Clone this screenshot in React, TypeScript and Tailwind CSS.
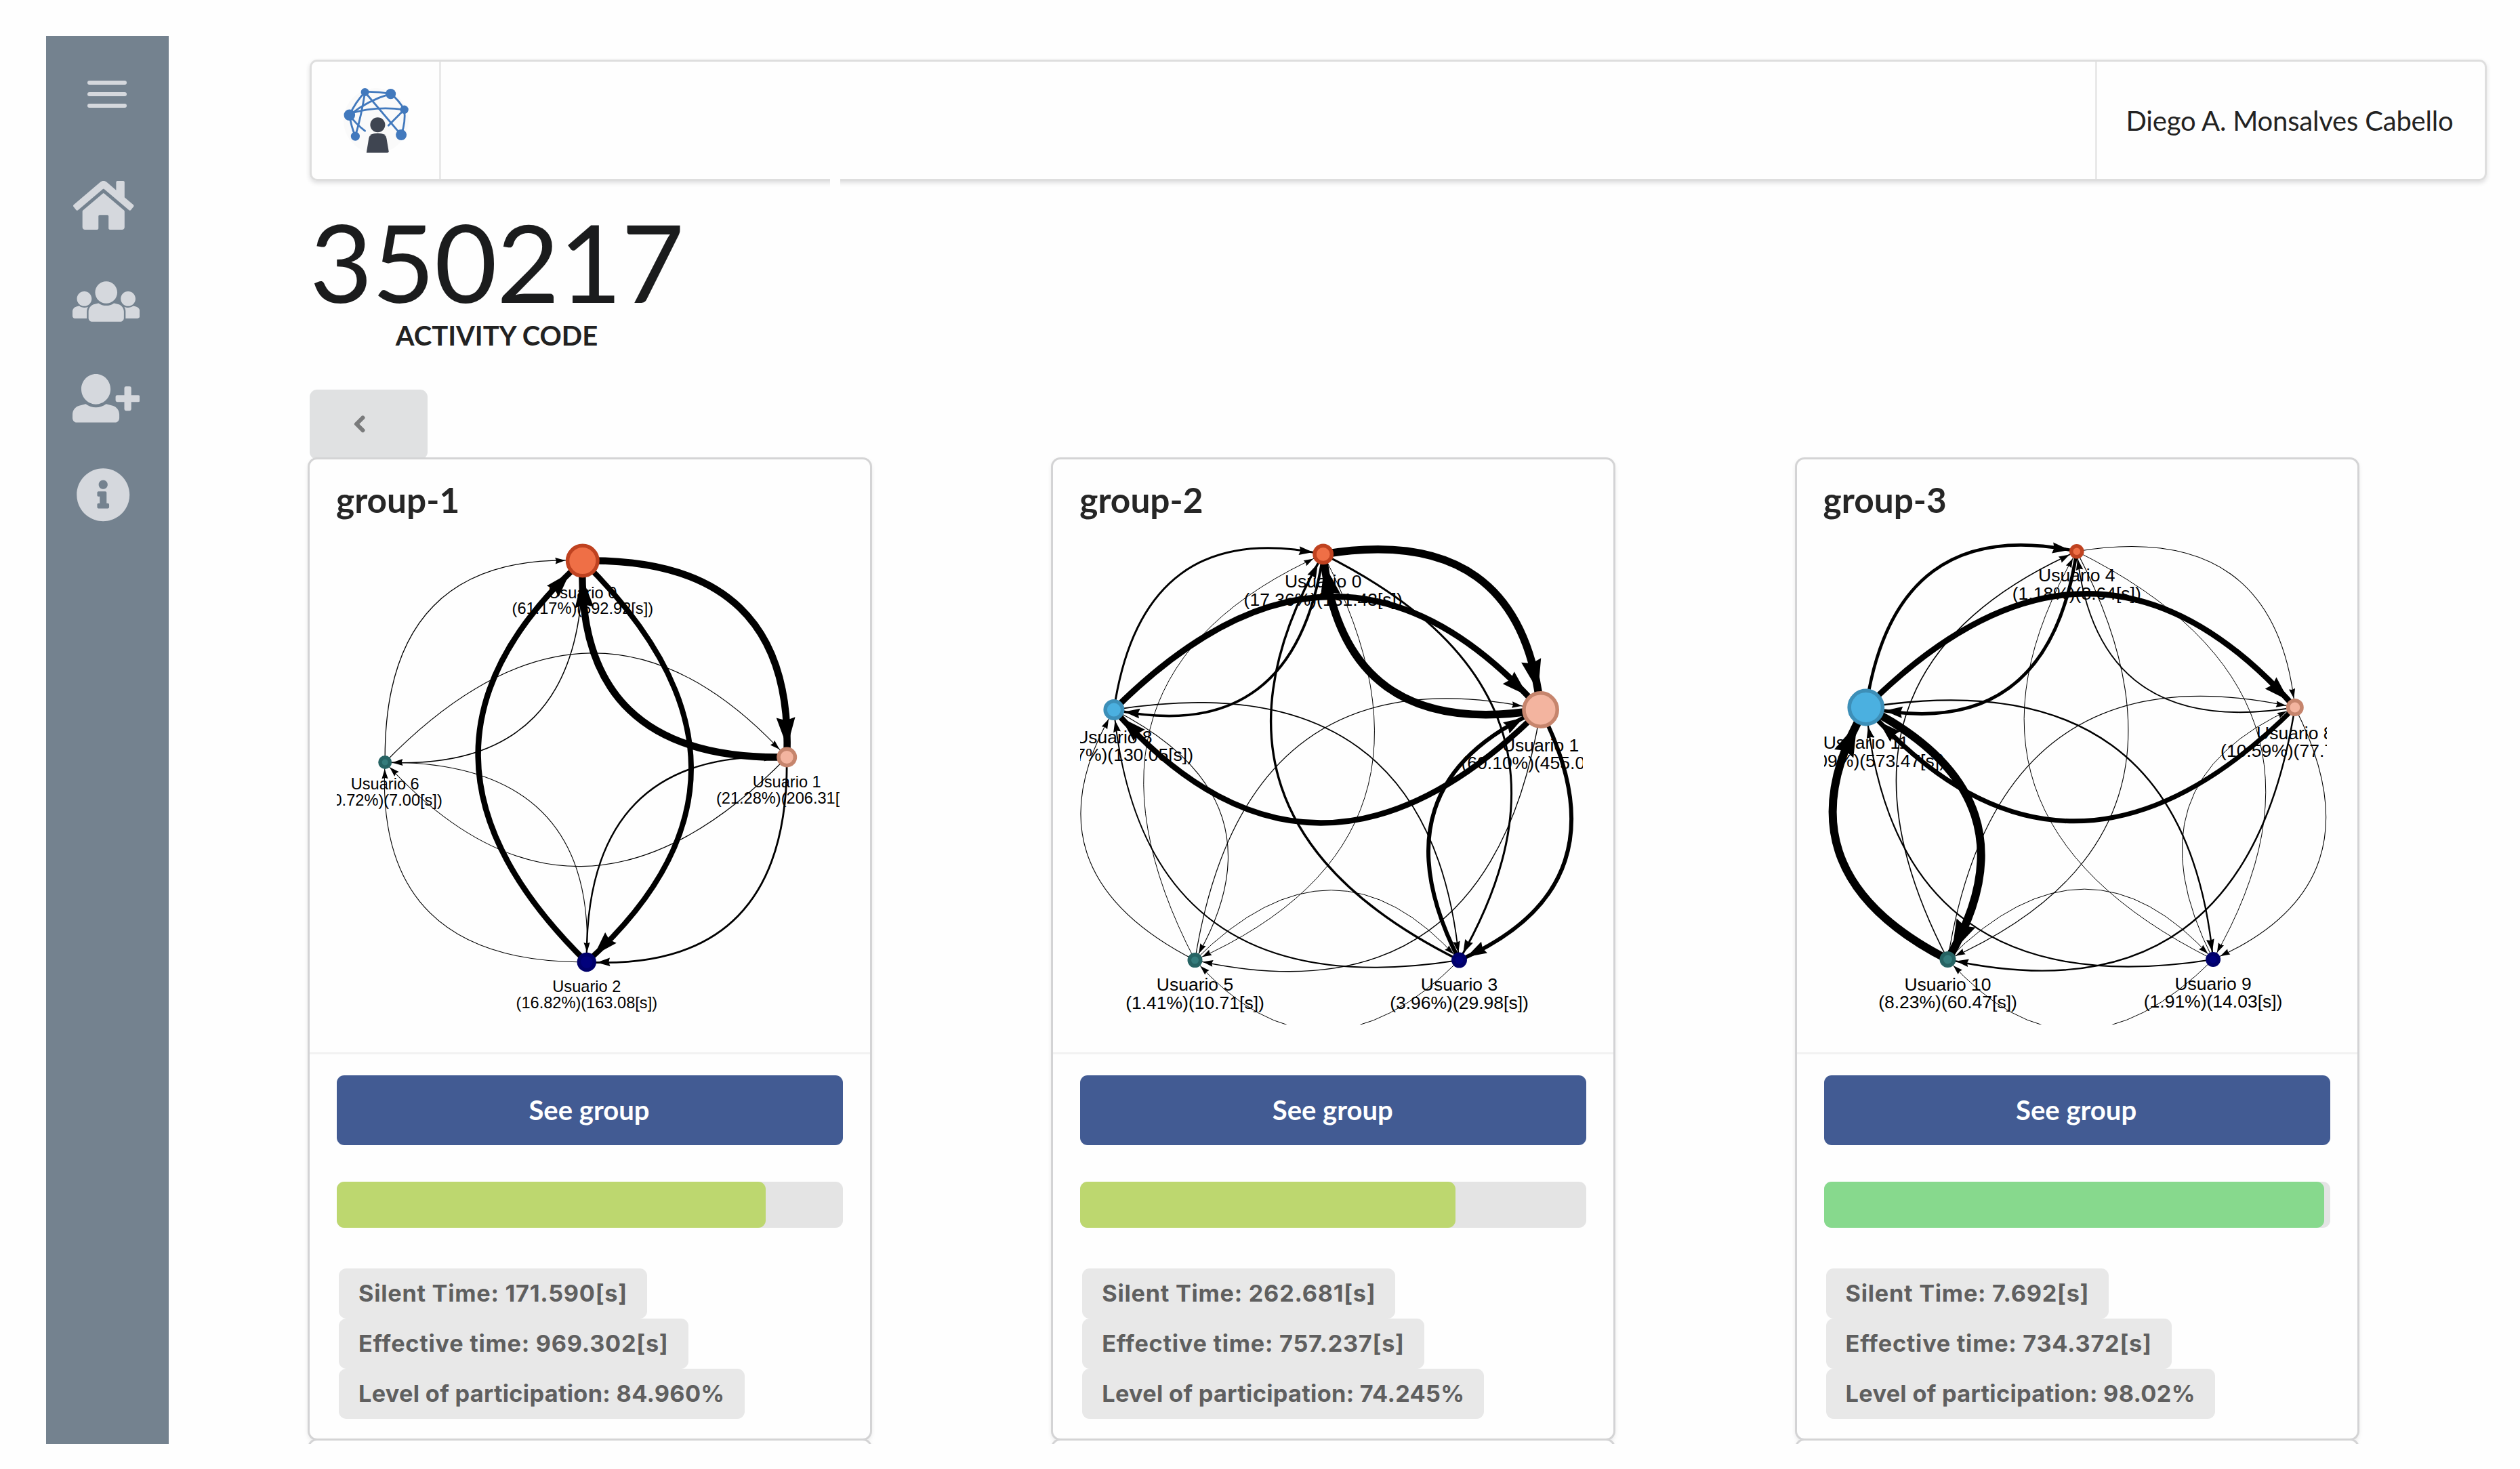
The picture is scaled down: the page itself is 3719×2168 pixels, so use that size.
import React from 'react';
import { FaChevronLeft, FaInfoCircle } from 'react-icons/fa';

interface GraphNode {
  id: number;
  x: number;
  y: number;
  r: number;
  kind: 'orange' | 'salmon' | 'navy' | 'teal' | 'blue';
  stats: string;
}

// from, to, line width
type Edge = [number, number, number];

interface Group {
  name: string;
  fontSize: number;
  nodes: GraphNode[];
  edges: Edge[];
  progress: number;
  barClass: string;
  labels: string[];
}

const COLORS = {
  orange: { fill: '#ef6f46', stroke: '#bf4220' },
  salmon: { fill: '#f3b49f', stroke: '#c6856d' },
  navy: { fill: '#01017c', stroke: '#00006a' },
  teal: { fill: '#347b7b', stroke: '#266363' },
  blue: { fill: '#4bb0e0', stroke: '#3d8fb8' },
};

const groups: Group[] = [
  {
    name: 'group-1',
    fontSize: 23.6,
    nodes: [
      { id: 0, x: 362.8, y: 57.6, r: 25, kind: 'orange', stats: '(61.17%)(592.92[s])' },
      { id: 1, x: 664.2, y: 347.5, r: 15, kind: 'salmon', stats: '(21.28%)(206.31[s])' },
      { id: 2, x: 368.8, y: 650, r: 14.2, kind: 'navy', stats: '(16.82%)(163.08[s])' },
      { id: 6, x: 71.2, y: 355, r: 10, kind: 'teal', stats: '(0.72%)(7.00[s])' },
    ],
    edges: [
      [0, 1, 10.5], [1, 0, 10.5], [0, 2, 8], [2, 0, 8.5], [1, 2, 2.8], [2, 1, 2.4],
      [6, 0, 1.3], [0, 6, 1.5], [6, 1, 1.1], [1, 6, 1.1], [6, 2, 1.1], [2, 6, 1.1],
    ],
    progress: 84.7,
    barClass: 'bg-[#bdd76f]',
    labels: ['Silent Time: 171.590[s]', 'Effective time: 969.302[s]', 'Level of participation: 84.960%'],
  },
  {
    name: 'group-2',
    fontSize: 26.5,
    nodes: [
      { id: 0, x: 358.7, y: 47.9, r: 15.4, kind: 'orange', stats: '(17.36%)(131.43[s])' },
      { id: 1, x: 679.6, y: 277.5, r: 27.4, kind: 'salmon', stats: '(60.10%)(455.07[s])' },
      { id: 3, x: 559.5, y: 647.1, r: 11.5, kind: 'navy', stats: '(3.96%)(29.98[s])' },
      { id: 5, x: 169.5, y: 647.1, r: 11, kind: 'teal', stats: '(1.41%)(10.71[s])' },
      { id: 8, x: 49.9, y: 277.5, r: 15.5, kind: 'blue', stats: '(17.17%)(130.05[s])' },
    ],
    edges: [
      [0, 1, 11.5], [1, 0, 11.5], [8, 1, 9], [1, 8, 8.5], [8, 0, 3], [0, 8, 3.8],
      [0, 3, 3], [3, 0, 3.4], [1, 3, 6], [3, 1, 6], [8, 3, 1.8], [3, 8, 2],
      [5, 1, 1.2], [1, 5, 1.4], [0, 5, 1], [5, 0, 1], [8, 5, 1.1], [5, 8, 1.1],
      [5, 3, 1], [3, 5, 1],
    ],
    progress: 74.1,
    barClass: 'bg-[#bdd76f]',
    labels: ['Silent Time: 262.681[s]', 'Effective time: 757.237[s]', 'Level of participation: 74.245%'],
  },
  {
    name: 'group-3',
    fontSize: 26.5,
    nodes: [
      { id: 4, x: 372.8, y: 43.8, r: 10.8, kind: 'orange', stats: '(1.18%)(8.64[s])' },
      { id: 8, x: 694.8, y: 274, r: 13, kind: 'salmon', stats: '(10.59%)(77.76[s])' },
      { id: 9, x: 574.1, y: 646, r: 11, kind: 'navy', stats: '(1.91%)(14.03[s])' },
      { id: 10, x: 182.5, y: 646, r: 12, kind: 'teal', stats: '(8.23%)(60.47[s])' },
      { id: 11, x: 61.8, y: 274, r: 27.4, kind: 'blue', stats: '(78.09%)(573.47[s])' },
    ],
    edges: [
      [11, 4, 4.6], [4, 11, 5], [11, 8, 8.5], [8, 11, 7], [10, 11, 12], [11, 10, 12],
      [11, 9, 2.4], [9, 11, 2.2], [8, 10, 2.4], [10, 8, 1.2], [4, 8, 1.1], [8, 4, 1.8],
      [8, 9, 1.1], [9, 8, 1], [4, 9, 1], [9, 4, 1], [4, 10, 1.1], [10, 4, 1.6],
      [10, 9, 1], [9, 10, 1],
    ],
    progress: 98.9,
    barClass: 'bg-[#87d98d]',
    labels: ['Silent Time: 7.692[s]', 'Effective time: 734.372[s]', 'Level of participation: 98.02%'],
  },
];

const GraphEdge: React.FC<{ from: GraphNode; to: GraphNode; width: number }> = ({ from, to, width }) => {
  const dx = to.x - from.x;
  const dy = to.y - from.y;
  const cx = from.x + 0.53033 * (dx + dy);
  const cy = from.y + 0.53033 * (dy - dx);
  const at = (t: number) => ({
    x: (1 - t) * (1 - t) * from.x + 2 * t * (1 - t) * cx + t * t * to.x,
    y: (1 - t) * (1 - t) * from.y + 2 * t * (1 - t) * cy + t * t * to.y,
  });

  // walk back from the target until the curve leaves the node
  let t = 1;
  while (t > 0 && Math.hypot(at(t).x - to.x, at(t).y - to.y) < to.r) t -= 0.001;
  const tip = at(t);
  const guide = at(t - 0.1);
  const angle = (Math.atan2(tip.y - guide.y, tip.x - guide.x) * 180) / Math.PI;
  const len = 11 + 3.1 * width;

  return (
    <g>
      <path
        d={`M${from.x} ${from.y}Q${cx} ${cy} ${to.x} ${to.y}`}
        fill="none"
        stroke="#000"
        strokeWidth={width}
      />
      <path
        d="M0 0L-1 .32L-.9 0L-1 -.32Z"
        transform={`translate(${tip.x} ${tip.y}) rotate(${angle}) scale(${len})`}
      />
    </g>
  );
};

const Network: React.FC<{ group: Group }> = ({ group }) => {
  const find = (id: number) => group.nodes.find((n) => n.id === id)!;
  const fs = group.fontSize;
  return (
    <svg width="742" height="742" viewBox="0 0 742 742" className="block overflow-hidden">
      {group.nodes.map((n) => (
        <g key={n.id} fontSize={fs} textAnchor="middle" className="font-['Liberation_Sans',sans-serif]">
          <text x={n.x} y={n.y + n.r + fs * 1.27}>Usuario {n.id}</text>
          <text x={n.x} y={n.y + n.r + fs * 2.28}>{n.stats}</text>
        </g>
      ))}
      {group.edges.map(([a, b, w]) => (
        <GraphEdge key={`${a}-${b}`} from={find(a)} to={find(b)} width={w} />
      ))}
      {group.nodes.map((n) => (
        <circle
          key={n.id}
          cx={n.x}
          cy={n.y}
          r={n.r - 2.75}
          fill={COLORS[n.kind].fill}
          stroke={COLORS[n.kind].stroke}
          strokeWidth={5.5}
        />
      ))}
    </svg>
  );
};

const GroupCard: React.FC<{ group: Group }> = ({ group }) => (
  <div className="w-[827px] shrink-0 rounded-[11px] bg-[#fefefe] shadow-[0_3px_8px_0_#d4d4d5,0_0_0_3px_#d4d4d5]">
    <div className="px-10 pt-[27px] pb-[41px]">
      <h2 className="-ml-px text-[51.4px] leading-[65px] font-bold text-[#262626]">{group.name}</h2>
      <Network group={group} />
    </div>
    <div className="border-t-3 border-[#f2f2f2] px-10 pt-[31px] pb-[29px]">
      <button className="block h-[103px] w-full rounded-[11px] bg-[#425b93] pr-0.5 pb-px text-[40px] font-bold text-white">
        See group
      </button>
      <div className="mt-[54px] h-[68px] rounded-[11px] bg-[#e4e4e4]">
        <div className={`h-full rounded-[11px] ${group.barClass}`} style={{ width: `${group.progress}%` }} />
      </div>
      <div className="mt-[60px] ml-[3px] flex flex-col items-start">
        {group.labels.map((label) => (
          <span
            key={label}
            className={`flex h-[74px] items-center rounded-[11px] bg-[#e8e8e8] px-[29px] font-['Inter',sans-serif] text-[34.3px] font-bold whitespace-nowrap text-[#5f5f5f] ${
              label.endsWith('%') ? 'tracking-[0.3px]' : 'tracking-[0.73px]'
            }`}
          >
            {label}
          </span>
        ))}
      </div>
    </div>
  </div>
);

const Logo = () => (
  <svg width="100" height="100" viewBox="0 0 100 100">
    <circle cx="50" cy="50" r="48" fill="#fafafa" />
    <g fill="none" stroke="#4279bd" strokeWidth="2.8" strokeLinecap="round">
      <path d="M33.6 7.5Q52 7 71.6 10.4M33.6 8Q20 22 10.8 41.8M71.6 10.4Q38 20 10.8 41.8M71.6 10.4Q83 19 91.6 33.8" />
      <path d="M10.8 40Q48 28 91.6 33.8M91.6 33.8Q94 52 87.1 71.1M10.8 41.8Q13 58 19.4 73.1M33.6 8Q29 40 19.4 73.1" />
      <path d="M33.6 8L87.1 71.1M10.8 41.8Q20 55 33.6 65.1M91.6 33.8L68.3 57.2" />
    </g>
    <g fill="#4279bd">
      <circle cx="33.6" cy="8" r="6" />
      <circle cx="71.6" cy="10.6" r="7.6" />
      <circle cx="10.8" cy="41.8" r="8.3" />
      <circle cx="91.6" cy="33.8" r="6.2" />
      <circle cx="19.4" cy="73.1" r="6.6" />
      <circle cx="87.1" cy="71.1" r="8" />
    </g>
    <g fill="#3f4551">
      <circle cx="52.4" cy="56.2" r="11" />
      <path d="M35.8 97.5L39.3 76Q41 68.6 52.4 68.6Q64 68.6 65.4 76L68.8 96L67 97.5Z" />
    </g>
  </svg>
);

const Sidebar = () => (
  <aside className="mt-[53px] ml-[68px] flex h-[2078px] w-[181px] shrink-0 flex-col items-start bg-[#74828f] text-[#d5d8dd]">
    <div className="mt-[66px] ml-[61px] flex flex-col gap-[11px]">
      <span className="h-1.5 w-[58px] rounded-full bg-current" />
      <span className="h-1.5 w-[58px] rounded-full bg-current" />
      <span className="h-1.5 w-[58px] rounded-full bg-current" />
    </div>
    <svg className="mt-[108px] ml-10" width="89.5" height="72" viewBox="0 32 576 448" preserveAspectRatio="none" fill="currentColor">
      <path d="M488 312.7V456c0 13.3-10.7 24-24 24H348c-6.6 0-12-5.4-12-12V356c0-6.6-5.4-12-12-12h-72c-6.6 0-12 5.4-12 12v112c0 6.6-5.4 12-12 12H112c-13.3 0-24-10.7-24-24V312.7c0-3.6 1.6-7 4.4-9.3l188-154.8c4.4-3.6 10.8-3.6 15.3 0l188 154.8c2.7 2.3 4.3 5.7 4.3 9.3zm83.6-60.9L488 182.9V44.4c0-6.6-5.4-12-12-12h-56c-6.6 0-12 5.4-12 12V117l-89.5-73.7c-17.7-14.6-43.3-14.6-61 0L4.4 251.8c-5.1 4.2-5.8 11.8-1.6 16.9l25.5 31c4.2 5.1 11.8 5.8 16.9 1.6l235.2-193.7c4.4-3.6 10.8-3.6 15.3 0l235.2 193.7c5.1 4.2 12.7 3.5 16.9-1.6l25.5-31c4.2-5.2 3.4-12.7-1.7-16.9z" />
    </svg>
    <svg className="mt-[76px] ml-[38.5px]" width="99.5" height="60" viewBox="0 64 640 384" fill="currentColor">
      <path d="M320 64c57.99 0 105 47.01 105 105s-47.01 105-105 105-105-47.01-105-105S262.01 64 320 64zm113.463 217.366l-39.982-9.996c-49.168 35.365-108.766 27.473-146.961 0l-39.982 9.996C174.485 289.379 152 318.177 152 351.216V412c0 19.882 16.118 36 36 36h264c19.882 0 36-16.118 36-36v-60.784c0-33.039-22.485-61.837-54.537-69.85zM528 300c38.66 0 70-31.34 70-70s-31.34-70-70-70-70 31.34-70 70 31.34 70 70 70zm-416 0c38.66 0 70-31.34 70-70s-31.34-70-70-70-70 31.34-70 70 31.34 70 70 70zm24 112v-60.784c0-16.551 4.593-32.204 12.703-45.599-29.988 14.72-63.336 8.708-85.69-7.37l-26.655 6.664C14.99 310.252 0 329.452 0 351.477V392c0 13.255 10.745 24 24 24h112.169a52.417 52.417 0 0 1-.169-4zm467.642-107.09l-26.655-6.664c-27.925 20.086-60.89 19.233-85.786 7.218C499.369 318.893 504 334.601 504 351.216V412c0 1.347-.068 2.678-.169 4H616c13.255 0 24-10.745 24-24v-40.523c0-22.025-14.99-41.225-36.358-46.567z" />
    </svg>
    <svg className="mt-[77px] ml-[38.5px]" width="99.5" height="71.6" viewBox="0 0 640 460.8" fill="currentColor">
      <path
        transform="scale(.868 .9)"
        d="M256 0c88.366 0 160 71.634 160 160s-71.634 160-160 160S96 248.366 96 160 167.634 0 256 0zm183.283 333.821l-71.313-17.828c-74.923 53.89-165.738 41.864-223.94 0l-71.313 17.828C29.981 344.505 0 382.903 0 426.955V464c0 26.51 21.49 48 48 48h416c26.51 0 48-21.49 48-48v-37.045c0-44.052-29.981-82.45-72.717-93.134z"
      />
      <rect x="409" y="201" width="231" height="64" rx="16" />
      <rect x="492" y="118" width="66" height="231" rx="16" />
    </svg>
    <FaInfoCircle className="mt-[66.5px] ml-[44px]" size={80.5} />
  </aside>
);

const App: React.FC = () => (
  <div className="flex h-[2168px] w-full items-start overflow-hidden bg-[#fefefe] font-['Lato',sans-serif] text-[#222]">
    <Sidebar />
    <main className="flex h-[2131px] min-w-0 flex-1 flex-col items-start overflow-hidden pt-[88px] pl-[208px]">
      <header className="relative flex h-[179px] w-[3213px] shrink-0 items-stretch rounded-[11px] border-3 border-[#dedede] shadow-[0_3px_6px_0_rgba(34,36,38,0.15)]">
        <div className="flex w-[191px] items-center justify-center border-r-3 border-[#e9e9e9] pl-0.5">
          <Logo />
        </div>
        <div className="ml-auto flex w-[575px] items-center justify-center border-l-3 border-[#e9e9e9] pr-1 text-[40px] tracking-[-0.2px]">
          Diego A. Monsalves Cabello
        </div>
        {/* pointer notch over the bottom edge */}
        <span className="absolute top-[173px] left-[765px] h-3 w-[15px] bg-[#fefefe]" />
      </header>

      <div className="mt-[38px] flex shrink-0 flex-col items-center">
        <div className="text-[160px] leading-none tracking-[-0.8px] text-[#1b1c1d]">350217</div>
        <div className="mt-2.5 text-[40px] leading-none font-bold">ACTIVITY CODE</div>
      </div>

      <button className="mt-[60px] flex h-[103px] w-[174px] shrink-0 items-center rounded-[11px] bg-[#e0e1e2] pb-0.5 pl-[60px] text-[#7a7b7c]">
        <FaChevronLeft size={27.5} stroke="currentColor" strokeWidth={32} className="overflow-visible" />
      </button>

      <div className="flex flex-col gap-[3px]">
        <div className="flex gap-[270.3px]">
          {groups.map((g) => (
            <GroupCard key={g.name} group={g} />
          ))}
        </div>
        <div className="flex gap-[270.3px]">
          {groups.map((g) => (
            <div
              key={g.name}
              className="h-40 w-[827px] shrink-0 rounded-[11px] bg-[#fefefe] shadow-[0_3px_8px_0_#d4d4d5,0_0_0_3px_#d4d4d5]"
            />
          ))}
        </div>
      </div>
    </main>
  </div>
);

export default App;
